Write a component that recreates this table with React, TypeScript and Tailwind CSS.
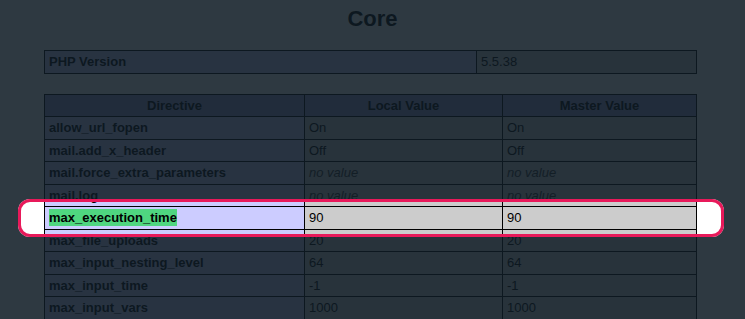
import React from 'react'

type Row = {
  name: string
  local: string
  master: string
}

const rows: Row[] = [
  { name: 'allow_url_fopen', local: 'On', master: 'On' },
  { name: 'mail.add_x_header', local: 'Off', master: 'Off' },
  { name: 'mail.force_extra_parameters', local: '', master: '' },
  { name: 'mail.log', local: '', master: '' },
  { name: 'max_execution_time', local: '90', master: '90' },
  { name: 'max_file_uploads', local: '20', master: '20' },
  { name: 'max_input_nesting_level', local: '64', master: '64' },
  { name: 'max_input_time', local: '-1', master: '-1' },
  { name: 'max_input_vars', local: '1000', master: '1000' },
]

const cell = 'border border-black px-[4px] py-[3px] text-[13px] leading-[15.5px]'

function Value({ v }: { v: string }) {
  // empty settings print the italic "no value" marker
  if (!v) return <i className="text-[#333]">no value</i>
  return <>{v}</>
}

export default function App() {
  return (
    <div className="relative h-[319px] overflow-hidden bg-white font-['Liberation_Sans',Arial,sans-serif] text-black">
      <h2 className="pt-[6px] text-center text-[22px] font-bold leading-[26px]">Core</h2>

      <table className="ml-[44px] mt-[18px] w-[653px] border-collapse">
        <tbody>
          <tr>
            <td className={`${cell} w-[432px] bg-[#ccccff] font-bold`}>PHP Version</td>
            <td className={`${cell} bg-[#cccccc]`}>5.5.38</td>
          </tr>
        </tbody>
      </table>

      <table className="ml-[44px] mt-[20px] w-[653px] border-collapse">
        <thead>
          <tr className="bg-[#9999cc]">
            <th className={`${cell} w-[260px] text-center font-bold`}>Directive</th>
            <th className={`${cell} w-[198px] text-center font-bold`}>Local Value</th>
            <th className={`${cell} text-center font-bold`}>Master Value</th>
          </tr>
        </thead>
        <tbody>
          {rows.map((r) => (
            <tr key={r.name}>
              <td className={`${cell} bg-[#ccccff] font-bold`}>
                {r.name === 'max_execution_time' ? (
                  <span className="bg-[#4fd680] py-[1px]">{r.name}</span>
                ) : (
                  r.name
                )}
              </td>
              <td className={`${cell} bg-[#cccccc]`}>
                <Value v={r.local} />
              </td>
              <td className={`${cell} bg-[#cccccc]`}>
                <Value v={r.master} />
              </td>
            </tr>
          ))}
        </tbody>
      </table>

      {/* spotlight: dims the page everywhere except inside the outlined row */}
      <div className="absolute left-[18px] top-[199px] h-[38px] w-[706px] rounded-[12px] border-[3px] border-[#e8195a] shadow-[0_0_0_2000px_rgba(15,28,37,0.87)]" />
    </div>
  )
}
